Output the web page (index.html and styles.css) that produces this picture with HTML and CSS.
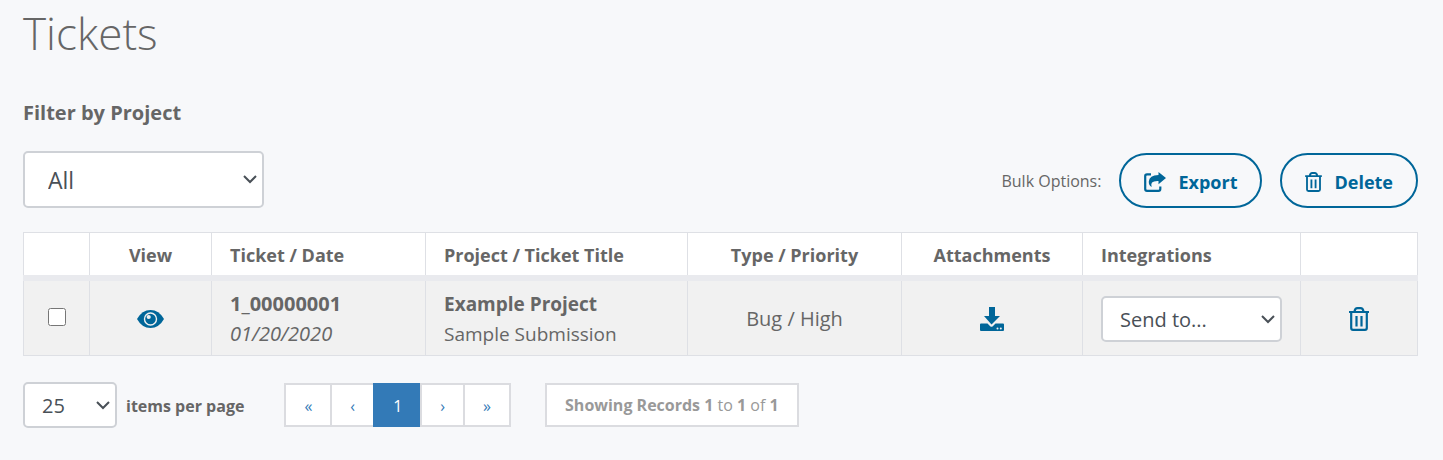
FILE: index.html
```html
<!DOCTYPE html>
<html lang="en">
<head>
    <meta charset="UTF-8">
    <meta name="viewport" content="width=device-width, initial-scale=1.0">
    <title>Tickets</title>
    <link rel="stylesheet" href="styles.css">
</head>
<body>
    <!-- shared icon shapes -->
    <svg class="sprite" aria-hidden="true">
        <symbol id="icon-trash" viewBox="0 0 20 24">
            <path d="M0 5h20M5.500 4.500Q6 1.200 8.500 1.200h3q2.500 0 3 3.300M2.200 5v16q0 1.800 1.800 1.800h12q1.800 0 1.800-1.800V5M7.500 9v10.500M12.500 9v10.500" fill="none" stroke="currentColor" stroke-width="2.200"/>
        </symbol>
    </svg>

    <main class="page">
        <h1>Tickets</h1>
        <label class="filter-label" for="project">Filter by Project</label>

        <div class="toolbar">
            <select id="project" class="select select-lg">
                <option>All</option>
            </select>
            <div class="bulk">
                <span class="bulk-label">Bulk Options:</span>
                <button type="button" class="btn">
                    <svg class="icon-export" viewBox="0 0 22 20" aria-hidden="true">
                        <path d="M7 2.300H3q-1.800 0-1.800 1.700v13q0 1.800 1.800 1.800h11.500q1.800 0 1.800-1.800v-2.500" fill="none" stroke="currentColor" stroke-width="2.200"/>
                        <path d="M14.500 0l7.500 6-7.500 6.200V9q-5-.2-6.500 1.500-1.200 1.400-.4 4.500Q4.500 13 4.800 9.500 5.200 3.300 14.500 3.100z" fill="currentColor"/>
                    </svg>
                    Export
                </button>
                <button type="button" class="btn">
                    <svg class="icon-delete" aria-hidden="true"><use href="#icon-trash"/></svg>
                    Delete
                </button>
            </div>
        </div>

        <table class="tickets">
            <colgroup>
                <col class="col-check">
                <col class="col-view">
                <col class="col-ticket">
                <col>
                <col class="col-type">
                <col class="col-files">
                <col class="col-send">
                <col class="col-delete">
            </colgroup>
            <thead>
                <tr>
                    <th></th>
                    <th class="center">View</th>
                    <th>Ticket / Date</th>
                    <th>Project / Ticket Title</th>
                    <th class="center">Type / Priority</th>
                    <th class="center">Attachments</th>
                    <th>Integrations</th>
                    <th></th>
                </tr>
            </thead>
            <tbody>
                <tr>
                    <td class="center"><input type="checkbox" aria-label="Select ticket 1_00000001"></td>
                    <td class="center">
                        <a href="#" aria-label="View ticket">
                            <svg class="icon-eye" viewBox="0 0 27 18" aria-hidden="true">
                                <path d="M0 9Q5 0 13.500 0T27 9q-5 9-13.500 9T0 9z" fill="currentColor"/>
                                <circle cx="13.500" cy="9" r="6" fill="none" stroke="#f1f1f1" stroke-width="1.400"/>
                                <circle cx="11.700" cy="7" r="2.100" fill="#f1f1f1"/>
                            </svg>
                        </a>
                    </td>
                    <td class="large"><strong>1_00000001</strong><br><em>01/20/2020</em></td>
                    <td><strong>Example Project</strong><br>Sample Submission</td>
                    <td class="center large">Bug / High</td>
                    <td class="center">
                        <a href="#" aria-label="Download attachments">
                            <svg class="icon-download" viewBox="0 0 24 24" aria-hidden="true">
                                <path d="M9 0h6v9h5l-8.500 8.500L4 9h5z" fill="currentColor"/>
                                <path d="M1 16.500h6.500l2.700 2.700q1.300 1 2.600 0l2.700-2.700H23q1 0 1 1V23q0 1-1 1H1q-1 0-1-1v-5.500q0-1 1-1z" fill="currentColor"/>
                                <circle cx="17.500" cy="21.500" r="1" fill="#f1f1f1"/>
                                <circle cx="20.800" cy="21.500" r="1" fill="#f1f1f1"/>
                            </svg>
                        </a>
                    </td>
                    <td>
                        <select class="select select-block" aria-label="Send to integration">
                            <option>Send to...</option>
                        </select>
                    </td>
                    <td class="center">
                        <a href="#" aria-label="Delete ticket"><svg class="icon-trash" aria-hidden="true"><use href="#icon-trash"/></svg></a>
                    </td>
                </tr>
            </tbody>
        </table>

        <div class="footer">
            <select id="per-page" class="select select-sm">
                <option>25</option>
            </select>
            <label class="per-page-label" for="per-page">items per page</label>
            <nav class="pagination" aria-label="Pages">
                <a href="#">«</a>
                <a href="#">‹</a>
                <a href="#" class="active">1</a>
                <a href="#">›</a>
                <a href="#">»</a>
            </nav>
            <div class="records"><b>Showing Records 1</b> to <b>1</b> of <b>1</b></div>
        </div>
    </main>
</body>
</html>
```
FILE: styles.css
```css
* {
    box-sizing: border-box;
}

body {
    margin: 0;
    background: #f7f8fa;
    color: #666;
    font-family: "Open Sans", "Noto Sans", sans-serif;
    font-size: 19px;
    line-height: 30px;
}

.sprite {
    position: absolute;
    width: 0;
    height: 0;
}

.page {
    padding: 3px 25px 32px 23px;
}

h1 {
    margin: 0 0 35px;
    font-size: 44px;
    font-weight: 300;
    line-height: 60px;
}

.filter-label {
    display: block;
    margin-bottom: 23px;
    font-size: 20px;
    font-weight: 700;
}

/* form controls */
.select {
    height: 46px;
    padding: 0 32px 0 17px;
    border: 2px solid #ced1d6;
    border-radius: 5px;
    appearance: none;
    background: #fff url("data:image/svg+xml,%3Csvg xmlns='http://www.w3.org/2000/svg' width='14' height='9'%3E%3Cpath d='M1 1l6 6 6-6' fill='none' stroke='%23495057' stroke-width='2'/%3E%3C/svg%3E") no-repeat right 5px center;
    color: #495057;
    font-family: inherit;
    font-size: 20px;
}

.select-lg {
    width: 241px;
    height: 57px;
    padding-left: 23px;
    font-size: 23px;
}

.select-sm {
    width: 94px;
}

.select-block {
    display: block;
    width: 100%;
}

.toolbar {
    display: flex;
    align-items: flex-end;
    justify-content: space-between;
    margin-bottom: 24px;
}

.bulk {
    display: flex;
    align-items: center;
    gap: 18px;
}

.bulk-label {
    font-size: 16px;
}

.btn {
    display: flex;
    align-items: center;
    gap: 12px;
    height: 55px;
    padding: 2px 23px 0;
    border: 2px solid #069;
    border-radius: 28px;
    background: transparent;
    color: #069;
    font-family: inherit;
    font-size: 18px;
    font-weight: 700;
    cursor: pointer;
}

/* tickets table */
.tickets {
    width: 100%;
    border-collapse: collapse;
    table-layout: fixed;
}

.tickets th,
.tickets td {
    padding: 8px 18px 6px;
    border: 1px solid #dee0e5;
    text-align: left;
}

.tickets th {
    padding: 7px 18px 5px;
    border-bottom: 6px solid #e9eaee;
    background: #fff;
    font-size: 18px;
    font-weight: 700;
}

.tickets td {
    background: #f1f1f1;
}

.tickets .center {
    padding-left: 0;
    padding-right: 0;
    text-align: center;
}

.tickets .large {
    font-size: 20px;
}

.tickets input {
    width: 18px;
    height: 18px;
    margin: 0;
}

.tickets a {
    color: #069;
}

.tickets svg {
    display: block;
    margin: 0 auto;
}

.col-check { width: 66px; }
.col-view { width: 122px; }
.col-ticket { width: 214px; }
.col-type { width: 214px; }
.col-files { width: 181px; }
.col-send { width: 218px; }
.col-delete { width: 117px; }

.icon-export { width: 22px; height: 20px; }
.icon-delete { width: 17px; height: 20px; }
.icon-eye { width: 27px; height: 18px; }
.icon-download { width: 24px; height: 24px; }
.icon-trash { width: 20px; height: 24px; }

/* paging */
.footer {
    display: flex;
    align-items: center;
    margin-top: 26px;
}

.per-page-label {
    margin: 0 42px 0 9px;
    padding-top: 2px;
    font-size: 16px;
    font-weight: 700;
}

.pagination {
    display: flex;
}

.pagination a {
    height: 44px;
    margin-left: -2px;
    padding: 0 18px;
    border: 2px solid #dbdce0;
    background: #fff;
    color: #337ab7;
    font-size: 16px;
    line-height: 42px;
    text-decoration: none;
}

.pagination .active {
    border-color: #337ab7;
    background: #337ab7;
    color: #fff;
}

.records {
    margin-left: 34px;
    padding: 5px 18px;
    border: 2px solid #dbdce0;
    background: #fff;
    color: #999;
    font-size: 16px;
}
```
